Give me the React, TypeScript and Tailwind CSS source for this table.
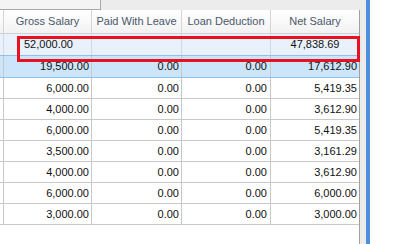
import React from 'react';

// rows shown under the filter line; first one is the selected row
const rows = [
  { gross: '19,500.00', leave: '0.00', loan: '0.00', net: '17,612.90' },
  { gross: '6,000.00', leave: '0.00', loan: '0.00', net: '5,419.35' },
  { gross: '4,000.00', leave: '0.00', loan: '0.00', net: '3,612.90' },
  { gross: '6,000.00', leave: '0.00', loan: '0.00', net: '5,419.35' },
  { gross: '3,500.00', leave: '0.00', loan: '0.00', net: '3,161.29' },
  { gross: '4,000.00', leave: '0.00', loan: '0.00', net: '3,612.90' },
  { gross: '6,000.00', leave: '0.00', loan: '0.00', net: '6,000.00' },
  { gross: '3,000.00', leave: '0.00', loan: '0.00', net: '3,000.00' },
];

const cols = 'grid grid-cols-[4px_88px_90px_89px_88px]';

const App: React.FC = () => {
  return (
    <div
      className="relative flex w-[400px] h-[244px] overflow-hidden bg-white text-[11px] text-[#111]"
      style={{ fontFamily: '"Liberation Sans", Arial, sans-serif' }}
    >
      {/* Grid panel */}
      <div className="flex flex-col w-[366px] bg-[#ececec]">
        <div className="h-[10px] shrink-0">
          <div className="w-[101px] h-[10px] bg-[#f4f4f4] border-r border-b border-[#a8a8a8]" />
        </div>

        <div className="flex flex-col flex-1 w-[360px] bg-white border-r border-[#a0a0a0]">
          {/* Header */}
          <div className={`${cols} h-[24px] shrink-0 bg-gradient-to-b from-white to-[#f2f2f2] border-b border-[#d0d0d0] text-[#4a586a]`}>
            <div className="border-r border-[#d5d5d5]" />
            <div className="flex items-center justify-center border-r border-[#d5d5d5]">Gross Salary</div>
            <div className="flex items-center justify-center border-r border-[#d5d5d5]">Paid With Leave</div>
            <div className="flex items-center justify-center border-r border-[#d5d5d5] whitespace-nowrap">Loan Deduction</div>
            <div className="flex items-center justify-center">Net Salary</div>
          </div>

          {/* Filter / totals row */}
          <div className={`${cols} h-[22px] shrink-0 bg-[#e9f2fc] border-b border-[#8fbfec]`}>
            <div className="border-r border-[#d0d8e2]" />
            <div className="flex items-center pl-[20px] border-r border-[#d0d8e2]">52,000.00</div>
            <div className="border-r border-[#d0d8e2]" />
            <div className="border-r border-[#d0d8e2]" />
            <div className="flex items-center justify-center">47,838.69</div>
          </div>

          {/* Data rows */}
          {rows.map((r, i) => (
            <div
              key={i}
              className={`${cols} shrink-0 ${
                i === 0 ? 'h-[22px] bg-[#cde5fa] border-b border-[#8fbfec]' : 'h-[21px] border-b border-[#c8c8c8]'
              }`}
            >
              <div className="border-r border-[#c8c8c8]" />
              <div className="flex items-center justify-end pr-[2px] border-r border-[#c8c8c8]">{r.gross}</div>
              <div className="flex items-center justify-end pr-[2px] border-r border-[#c8c8c8]">{r.leave}</div>
              <div className="flex items-center justify-end pr-[3px] border-r border-[#c8c8c8]">{r.loan}</div>
              <div className="flex items-center justify-end pr-[2px]">{r.net}</div>
            </div>
          ))}
        </div>
      </div>

      {/* window edge */}
      <div className="w-[4px] bg-[#4d8fdc]" />
      <div className="flex-1 bg-white" />

      {/* red highlight around totals row */}
      <div className="absolute left-[17px] top-[36px] w-[343px] h-[26px] border-[3px] border-[#e8111f]" />
    </div>
  );
};

export default App;
